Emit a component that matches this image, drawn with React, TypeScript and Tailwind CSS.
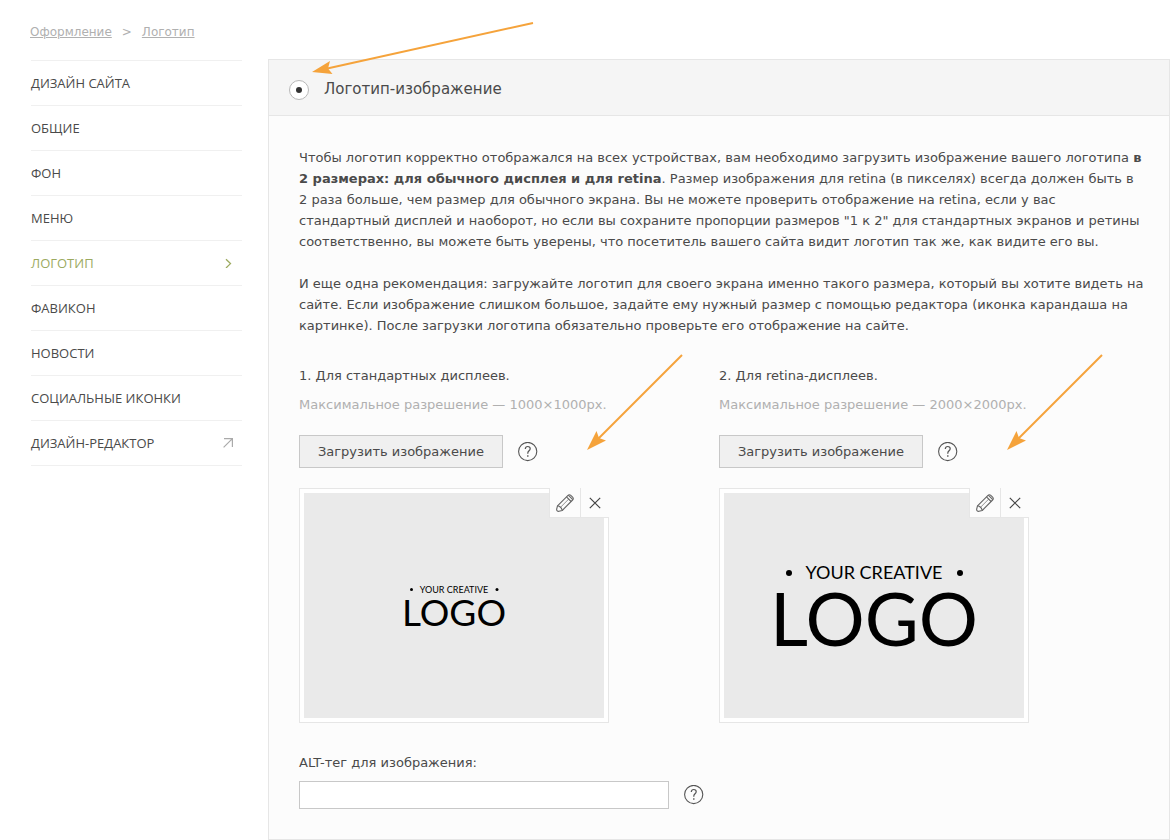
const menuItems = [
  { label: "Дизайн сайта" },
  { label: "Общие" },
  { label: "Фон" },
  { label: "Меню" },
  { label: "Логотип", active: true },
  { label: "Фавикон" },
  { label: "Новости" },
  { label: "Социальные иконки" },
  { label: "Дизайн-редактор", external: true },
];

const displays = [
  {
    title: "1. Для стандартных дисплеев.",
    hint: "Максимальное разрешение — 1000×1000px.",
    logoClass: "w-[110px]",
  },
  {
    title: "2. Для retina-дисплеев.",
    hint: "Максимальное разрешение — 2000×2000px.",
    logoClass: "w-[220px]",
  },
];

const HelpButton = () => (
  <button type="button" aria-label="Помощь" className="shrink-0 text-[#555]">
    <svg width="20" height="20" viewBox="0 0 20 20" fill="none" stroke="currentColor">
      <circle cx="9.7" cy="9.5" r="9.1" strokeWidth="1.1" />
      <path d="M7.3 7C7.3 5.2 8.300 4.500 9.700 4.500s2.500.8 2.500 2.200c0 1.900-2.400 2.200-2.400 4.300v.8" strokeWidth="1.2" />
      <path d="M9.800 13.300v1.400" strokeWidth="1.4" />
    </svg>
  </button>
);

const PencilIcon = () => (
  <svg width="18" height="18" viewBox="0 0 18 18" fill="none" stroke="#666" strokeWidth="1.1" strokeLinejoin="round">
    <path d="M1.500 11.800L12 1.400a2 2 0 0 1 2.800 0l1.800 1.800a2 2 0 0 1 0 2.800L6.200 16.500 3 17.300a1.900 1.900 0 0 1-2.300-2.300z" />
    <path d="M1.500 11.800c2.200.3 4.200 2.400 4.700 4.700M10.500 2.900l4.600 4.600M12.300 1.200l4.500 4.500" />
    <path d="M4.300 13.500l8.400-8.400" strokeWidth="0.7" />
  </svg>
);

const CloseIcon = () => (
  <svg width="12" height="12" viewBox="0 0 12 12" stroke="#444" strokeWidth="1.2">
    <path d="M.8.8l10.400 10.400M11.200.8L.8 11.200" />
  </svg>
);

const CreativeLogo = ({ className }: { className: string }) => (
  <svg
    viewBox="0 0 220 112"
    className={className}
    fontFamily="Lato, sans-serif"
    textAnchor="middle"
  >
    <circle cx="25" cy="23" r="3" />
    <text x="110" y="29" fontSize="18">
      YOUR CREATIVE
    </text>
    <circle cx="196" cy="23" r="3" />
    <text x="110" y="96" fontSize="74">
      LOGO
    </text>
  </svg>
);

const DiagonalArrow = () => (
  <svg
    width="97"
    height="97"
    viewBox="0 0 97 97"
    aria-hidden="true"
    className="absolute left-[288px] -top-[11px] pointer-events-none"
  >
    <path d="M95 1L10 86" stroke="#f5a33b" strokeWidth="2" />
    <path d="M0 96L9.500 77l2.500 7 7 2.500z" fill="#f5a33b" />
  </svg>
);

const Sidebar = () => (
  <nav className="ml-px border-t border-[#f0f0f0] font-['Open_Sans',sans-serif] text-[13px] leading-5 text-[#4a4a4a]">
    {menuItems.map((item) => (
      <a
        key={item.label}
        href="#"
        className={`flex h-[45px] items-center justify-between border-b border-[#f0f0f0] pr-[9px] uppercase ${
          item.active ? "text-[#9caa5f]" : ""
        }`}
      >
        {item.label}
        {item.active && (
          <svg width="10" height="10" viewBox="0 0 10 10" fill="none" stroke="currentColor" strokeWidth="1.3">
            <path d="M3 1.200L7.500 5.600 3 10" />
          </svg>
        )}
        {item.external && (
          <svg width="10" height="10" viewBox="0 0 10 10" fill="none" stroke="#aaa" strokeWidth="1.2">
            <path d="M1 .6h8.400V9M9.400.6L.6 9.400" />
          </svg>
        )}
      </a>
    ))}
  </nav>
);

const DisplayUpload = ({ title, hint, logoClass }: (typeof displays)[number]) => (
  <div className="relative">
    <p>{title}</p>
    <p className="mt-2 text-[#b0b0b0]">{hint}</p>
    <div className="mt-5 flex items-center gap-[15px]">
      <button
        type="button"
        className="h-[33px] w-[204px] border border-[#c8c8c8] bg-[#f0f0f0] whitespace-nowrap"
      >
        Загрузить изображение
      </button>
      <HelpButton />
    </div>
    <div className="relative mt-5 w-[310px] border border-[#e6e6e6] bg-white p-1">
      <div className="flex h-[225px] items-center justify-center bg-[#eaeaea]">
        <CreativeLogo className={logoClass} />
      </div>
      <div className="absolute -top-px -right-px flex h-[30px] w-[60px] border-b border-l border-[#e6e6e6] bg-[#fcfcfc]">
        <button
          type="button"
          aria-label="Редактировать"
          className="flex w-[30px] items-center justify-center"
        >
          <PencilIcon />
        </button>
        <button
          type="button"
          aria-label="Удалить"
          className="flex flex-1 items-center justify-center border-l border-[#e6e6e6]"
        >
          <CloseIcon />
        </button>
      </div>
    </div>
    <DiagonalArrow />
  </div>
);

const App = () => {
  return (
    <div className="min-h-screen bg-white pl-[30px] font-['DejaVu_Sans',sans-serif] text-[13px] leading-[21px] text-[#4a4a4a]">
      <div className="flex items-start gap-[26px]">
        <div className="w-[212px] shrink-0 pt-[22px]">
          <div className="mb-[17px] flex gap-2.5 text-[12px] text-[#b0b0b0]">
            <a href="#" className="underline">
              Оформление
            </a>
            <span>&gt;</span>
            <a href="#" className="underline">
              Логотип
            </a>
          </div>
          <Sidebar />
        </div>

        <main className="mt-[59px] min-w-0 flex-1 border border-[#e6e6e6] bg-[#fcfcfc]">
          <div className="relative flex h-14 items-center border-b border-[#e6e6e6] bg-[#f5f5f5] px-5 pt-1">
            <label className="flex items-center gap-[15px] text-[15px]">
              <input
                type="radio"
                name="logo-type"
                defaultChecked
                className="grid size-5 appearance-none place-content-center rounded-full border border-[#b8b8b8] bg-white before:size-1.5 before:rounded-full before:bg-[#333]"
              />
              Логотип-изображение
            </label>
            <svg
              width="222"
              height="54"
              viewBox="0 0 222 54"
              aria-hidden="true"
              className="pointer-events-none absolute -top-[38px] left-[43px]"
            >
              <path d="M221 1L13 47" stroke="#f5a33b" strokeWidth="2" />
              <path d="M0 50l18-11-2 7.500 4.500 5.500z" fill="#f5a33b" />
            </svg>
          </div>

          <div className="px-[30px] pt-[31px] pb-[30px]">
            <div className="-mr-2.5">
              <p>
                Чтобы логотип корректно отображался на всех устройствах, вам необходимо загрузить
                изображение вашего логотипа{" "}
                <b>в 2 размерах: для обычного дисплея и для retina</b>. Размер изображения для
                retina (в пикселях) всегда должен быть в<br className="hidden lg:inline" /> 2 раза
                больше, чем размер для обычного экрана. Вы не можете проверить отображение на
                retina, если у вас
                <br className="hidden lg:inline" /> стандартный дисплей и наоборот, но если вы
                сохраните пропорции размеров "1 к 2" для стандартных экранов и ретины
                соответственно, вы можете быть уверены, что посетитель вашего сайта видит логотип
                так же, как видите его вы.
              </p>
              <p className="mt-[21px]">
                И еще одна рекомендация: загружайте логотип для своего экрана именно такого
                размера, который вы хотите видеть на сайте. Если изображение слишком большое,
                задайте ему нужный размер с помощью редактора (иконка карандаша на картинке).
                После загрузки логотипа обязательно проверьте его отображение на сайте.
              </p>
            </div>

            <div className="mt-[29px] grid grid-cols-2">
              {displays.map((display) => (
                <DisplayUpload key={display.title} {...display} />
              ))}
            </div>

            <label htmlFor="alt-tag" className="mt-[29px] block">
              ALT-тег для изображения:
            </label>
            <div className="mt-2 flex items-center gap-[15px]">
              <input
                id="alt-tag"
                type="text"
                className="h-7 w-[370px] border border-[#c8c8c8] bg-white px-2"
              />
              <HelpButton />
            </div>
          </div>
        </main>
      </div>
    </div>
  );
};

export default App;
